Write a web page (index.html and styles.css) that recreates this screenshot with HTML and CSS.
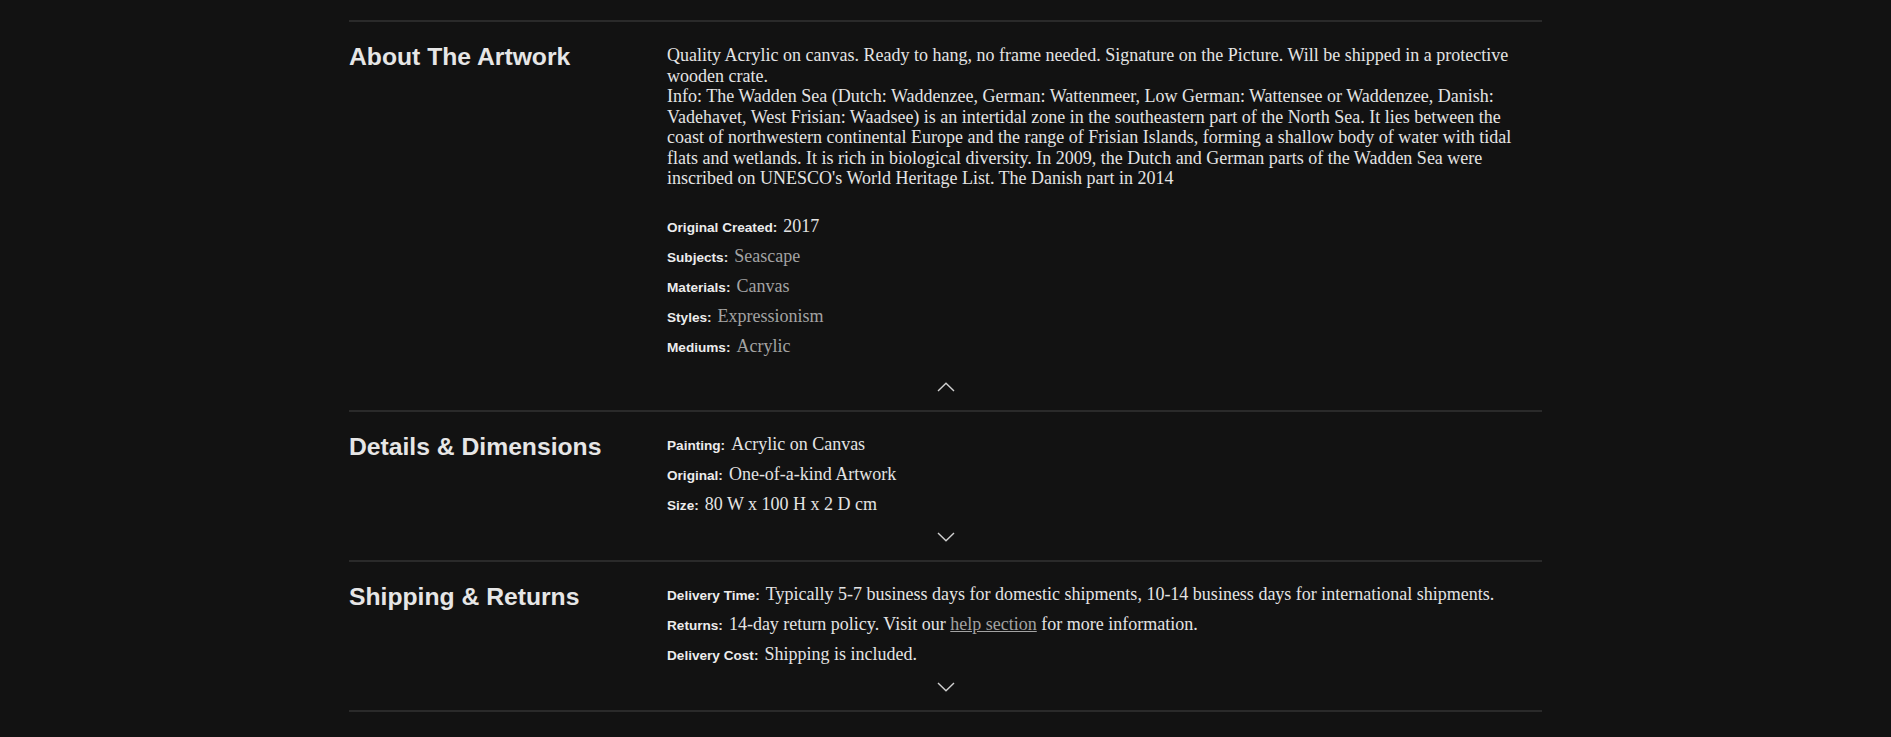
FILE: index.html
```html
<!DOCTYPE html>
<html lang="en">
<head>
<meta charset="utf-8">
<title>Artwork details</title>
<link rel="stylesheet" href="styles.css">
</head>
<body>
<main class="info">
  <section class="section">
    <div class="section-body">
      <h2 class="section-title">About The Artwork</h2>
      <div class="section-content">
        <p class="about-text">Quality Acrylic on canvas. Ready to hang, no frame needed. Signature on the Picture. Will be shipped in a protective wooden crate.<br>Info: The Wadden Sea (Dutch: Waddenzee, German: Wattenmeer, Low German: Wattensee or Waddenzee, Danish: Vadehavet, West Frisian: Waadsee) is an intertidal zone in the southeastern part of the North Sea. It lies between the coast of northwestern continental Europe and the range of Frisian Islands, forming a shallow body of water with tidal flats and wetlands. It is rich in biological diversity. In 2009, the Dutch and German parts of the Wadden Sea were inscribed on UNESCO's World Heritage List. The Danish part in 2014</p>
        <div class="rows">
          <div class="row"><span class="label">Original Created:</span><span class="value">2017</span></div>
          <div class="row"><span class="label">Subjects:</span><a class="value link" href="#">Seascape</a></div>
          <div class="row"><span class="label">Materials:</span><a class="value link" href="#">Canvas</a></div>
          <div class="row"><span class="label">Styles:</span><a class="value link" href="#">Expressionism</a></div>
          <div class="row"><span class="label">Mediums:</span><a class="value link" href="#">Acrylic</a></div>
        </div>
      </div>
    </div>
    <div class="toggle toggle-open">
      <svg width="18" height="10" viewBox="0 0 18 10"><polyline points="1,9 9,1.2 17,9" fill="none" stroke="#d0d0d0" stroke-width="1.4"/></svg>
    </div>
  </section>

  <section class="section">
    <div class="section-body">
      <h2 class="section-title">Details &amp; Dimensions</h2>
      <div class="section-content">
        <div class="rows">
          <div class="row"><span class="label">Painting:</span><span class="value">Acrylic on Canvas</span></div>
          <div class="row"><span class="label">Original:</span><span class="value">One-of-a-kind Artwork</span></div>
          <div class="row"><span class="label">Size:</span><span class="value">80 W x 100 H x 2 D cm</span></div>
        </div>
      </div>
    </div>
    <div class="toggle">
      <svg width="18" height="10" viewBox="0 0 18 10"><polyline points="1,1 9,8.8 17,1" fill="none" stroke="#d0d0d0" stroke-width="1.4"/></svg>
    </div>
  </section>

  <section class="section">
    <div class="section-body">
      <h2 class="section-title">Shipping &amp; Returns</h2>
      <div class="section-content">
        <div class="rows">
          <div class="row"><span class="label">Delivery Time:</span><span class="value">Typically 5-7 business days for domestic shipments, 10-14 business days for international shipments.</span></div>
          <div class="row"><span class="label">Returns:</span><span class="value">14-day return policy. Visit our <a class="help-link" href="#">help section</a> for more information.</span></div>
          <div class="row"><span class="label">Delivery Cost:</span><span class="value">Shipping is included.</span></div>
        </div>
      </div>
    </div>
    <div class="toggle">
      <svg width="18" height="10" viewBox="0 0 18 10"><polyline points="1,1 9,8.8 17,1" fill="none" stroke="#d0d0d0" stroke-width="1.4"/></svg>
    </div>
  </section>
</main>
</body>
</html>
```

FILE: styles.css
```css
html, body {
  margin: 0;
  padding: 0;
  background: #121212;
}

body {
  color: #e2e2e2;
  font-family: "Liberation Serif", "Times New Roman", serif;
}

.info {
  width: 1193px;
  margin: 0 auto;
  padding-top: 20px;
}

.section {
  border-top: 2px solid #2a2a2a;
  padding: 17px 0 18px;
}

.section:last-child {
  border-bottom: 2px solid #2a2a2a;
}

.section-body {
  display: flex;
}

.section-title {
  flex: 0 0 318px;
  margin: 4px 0 0;
  font-family: "Liberation Sans", Arial, sans-serif;
  font-weight: 700;
  font-size: 24.7px;
  line-height: normal;
  color: #e6e6e6;
}

.section-content {
  flex: 1;
  min-width: 0;
}

.about-text {
  margin: 6px 0 22px;
  font-size: 18px;
  line-height: 20.5px;
  color: #e4e4e4;
}

.rows {
  display: flex;
  flex-direction: column;
}

.row {
  height: 30px;
  font-size: 18px;
  line-height: 30px;
  white-space: nowrap;
}

.label {
  font-family: "Liberation Sans", Arial, sans-serif;
  font-weight: 700;
  font-size: 13.6px;
  line-height: 1;
  color: #ececec;
  margin-right: 6px;
}

.value {
  color: #e4e4e4;
}

.link {
  color: #a3a3a3;
  text-decoration: none;
}

.help-link {
  color: #a3a3a3;
  text-decoration: underline;
}

.toggle {
  display: flex;
  justify-content: center;
  margin-top: 13px;
}

.toggle svg {
  display: block;
}

.toggle-open {
  margin-top: 21px;
}
```
